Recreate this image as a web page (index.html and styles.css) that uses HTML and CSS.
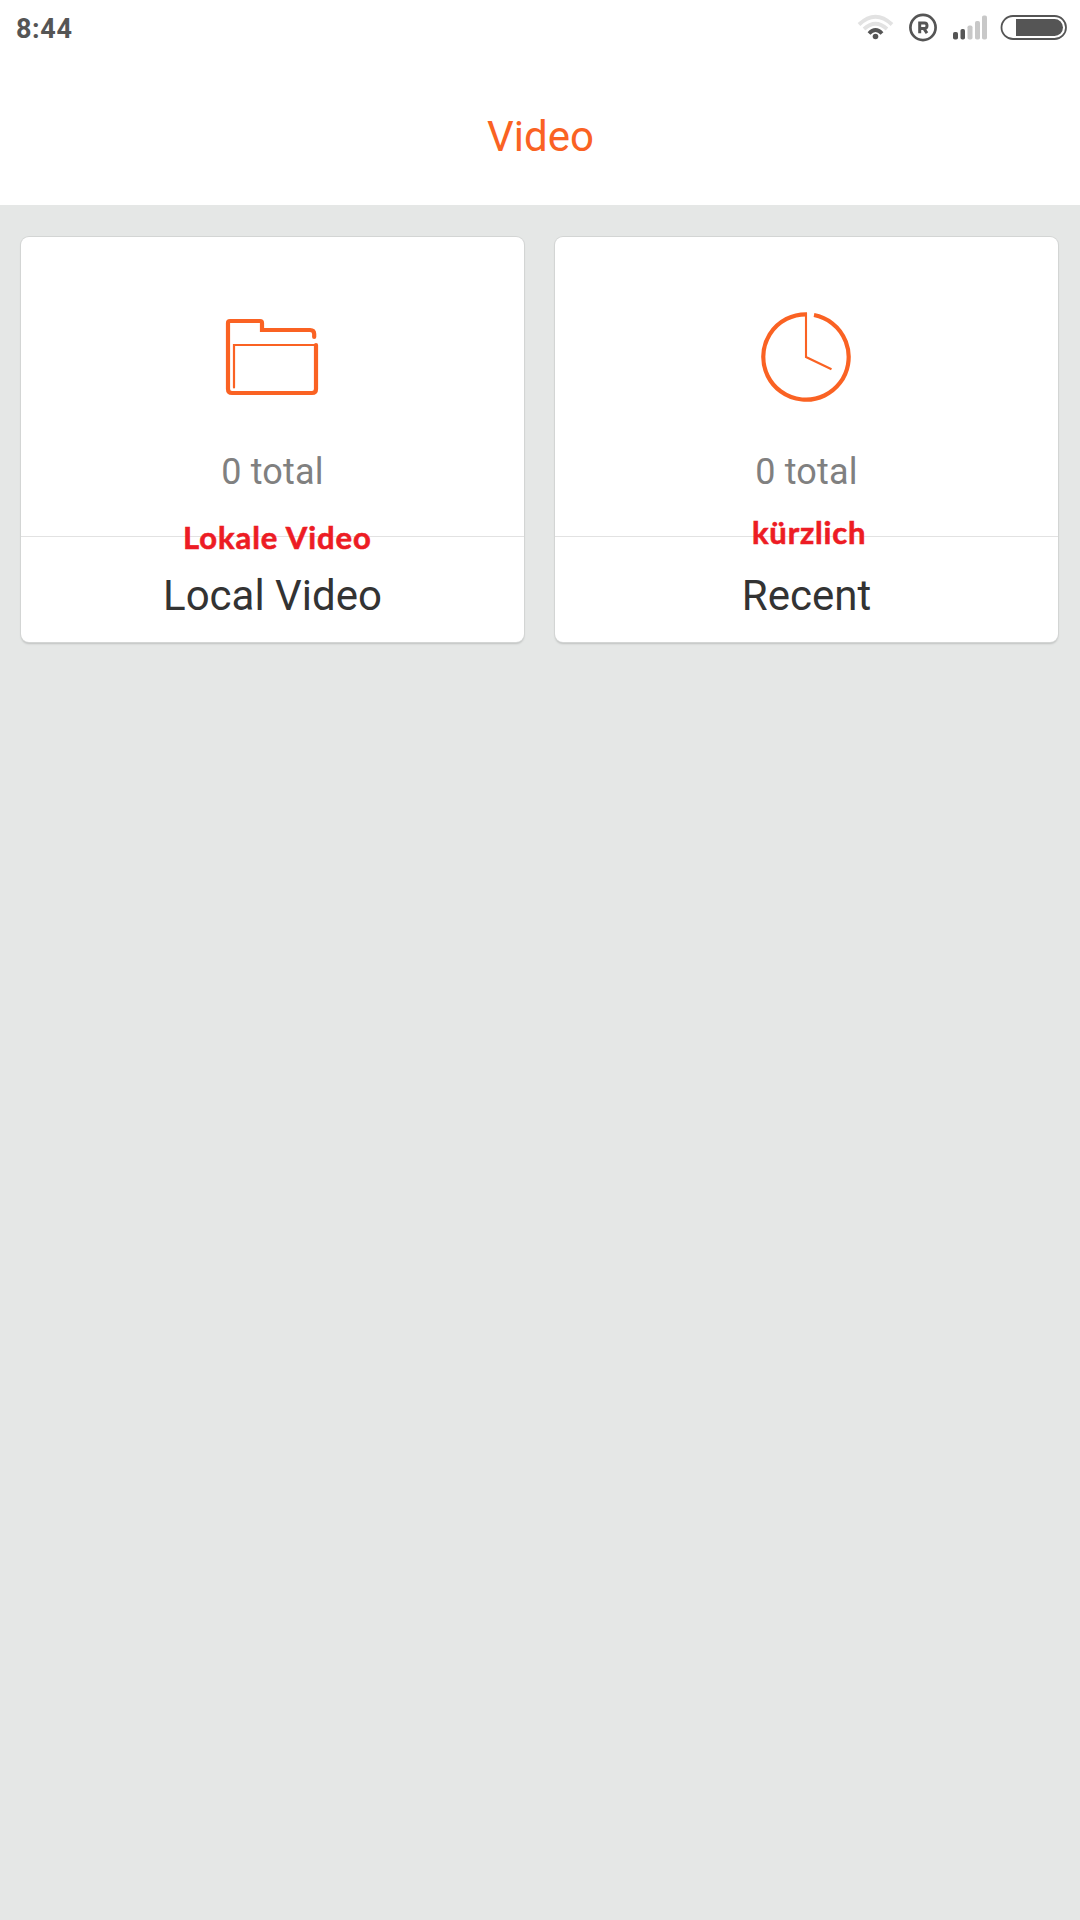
FILE: index.html
```html
<!DOCTYPE html>
<html lang="en">
<head>
<meta charset="utf-8">
<title>Video</title>
<link rel="stylesheet" href="styles.css">
</head>
<body>
<header class="header">
  <div class="status">
    <span class="time">8:44</span>
    <svg class="status-icons" width="220" height="60" viewBox="0 0 220 60" fill="none">
      <g stroke-width="3.8">
        <path d="M-1 24.5Q15.5 9 32 24.5" stroke="#e2e2e2"/>
        <path d="M4 29Q15.5 18.5 27 29" stroke="#e2e2e2"/>
        <path d="M9 33.5Q15.5 26.5 22 33.5" stroke="#555"/>
      </g>
      <circle cx="15.5" cy="36.5" r="2.8" fill="#555"/>
      <circle cx="63" cy="27.5" r="12.6" stroke="#555" stroke-width="2.7"/>
      <path d="M59.7 33.2V22.900H64.500Q67 22.900 67 25.700T64.500 28.500H59.700M63.800 28.500L67 33.200" stroke="#555" stroke-width="3"/>
      <g fill="#555"><rect x="93" y="32" width="5" height="7.5" rx="1.8"/><rect x="100.500" y="29" width="4.500" height="10.500" rx="1.8"/></g>
      <g fill="#c8c8c8"><rect x="107.500" y="25.500" width="5" height="14" rx="1.800"/><rect x="115" y="21" width="5" height="18.500" rx="1.800"/><rect x="122" y="15.500" width="5" height="24" rx="1.800"/></g>
      <rect x="141.500" y="16" width="64.500" height="23" rx="11.500" stroke="#555" stroke-width="1.800"/>
      <path d="M156 19H194.500A8.500 8.500 0 0 1 194.500 36H156Z" fill="#555"/>
    </svg>
  </div>
  <h1 class="title">Video</h1>
</header>
<main class="cards">
  <section class="card">
    <div class="summary">
      <svg class="icon" width="139" height="110" viewBox="3 1 139 110" fill="none" stroke="#fa6223" stroke-linecap="round">
        <path d="M114.200 37V34Q114.200 30 110 30H62V23Q62 21 60 21H30Q28 21 28 23V89Q28 93 32 93H112Q116 93 116 89V45" stroke-width="4.200"/>
        <path d="M34 87.500V45H116" stroke-width="2.200"/>
      </svg>
      <p class="count">0 total</p>
    </div>
    <h2 class="name">Local Video</h2>
    <span class="note note-local">Lokale Video</span>
  </section>
  <section class="card">
    <div class="summary">
      <svg class="icon" width="139" height="110" viewBox="-3 1 139 110" fill="none" stroke="#fa6223">
        <path d="M67 14.300H66A42.700 42.700 0 1 0 74 15.060" stroke-width="4.200"/>
        <path d="M66 13V57L91.500 69.300" stroke-width="2.100"/>
      </svg>
      <p class="count">0 total</p>
    </div>
    <h2 class="name">Recent</h2>
    <span class="note note-recent">kürzlich</span>
  </section>
</main>
</body>
</html>
```
FILE: styles.css
```css
* { box-sizing: border-box; }
body {
  margin: 0;
  min-height: 1920px;
  background: #e5e7e6;
  font-family: Roboto, "Liberation Sans", sans-serif;
}
h1, h2, p { margin: 0; font-weight: 400; }
.header { height: 205px; background: #fff; }
.status {
  display: flex;
  justify-content: space-between;
  height: 60px;
  padding: 0 0 0 16px;
}
.time { font-size: 27px; line-height: 58px; font-weight: 700; letter-spacing: 0.6px; color: #555; }
.status-icons { overflow: visible; }
.title {
  padding: 52px 0 0 1px;
  font-size: 42px;
  line-height: 50px;
  text-align: center;
  color: #fa6223;
}
.cards {
  display: grid;
  grid-template-columns: 1fr 1fr;
  gap: 31px;
  padding: 32px 22px 0 21px;
}
.card {
  position: relative;
  height: 405px;
  background: #fff;
  border-radius: 8px;
  box-shadow: 0 0 0 1px #d3d5d4, 0 2px 2px #bfc1c0;
}
.summary {
  height: 300px;
  padding-top: 64px;
  border-bottom: 1px solid #e2e2e2;
  text-align: center;
}
.icon { display: block; margin: 0 auto; }
.count { margin-top: 40px; font-size: 36px; line-height: 42px; letter-spacing: 0.2px; color: #808080; }
.name {
  padding-top: 34px;
  font-size: 42px;
  line-height: 50px;
  text-align: center;
  color: #333;
}
.note {
  position: absolute;
  font-family: Lato, Roboto, sans-serif;
  font-size: 31px;
  line-height: 38px;
  font-weight: 700;
  letter-spacing: 0.95px;
  -webkit-text-stroke: 0.6px #ed1c24;
  white-space: nowrap;
  color: #ed1c24;
}
.note-local { left: 162px; top: 281px; }
.note-recent { left: 197px; top: 276px; letter-spacing: 0.8px; }
```
